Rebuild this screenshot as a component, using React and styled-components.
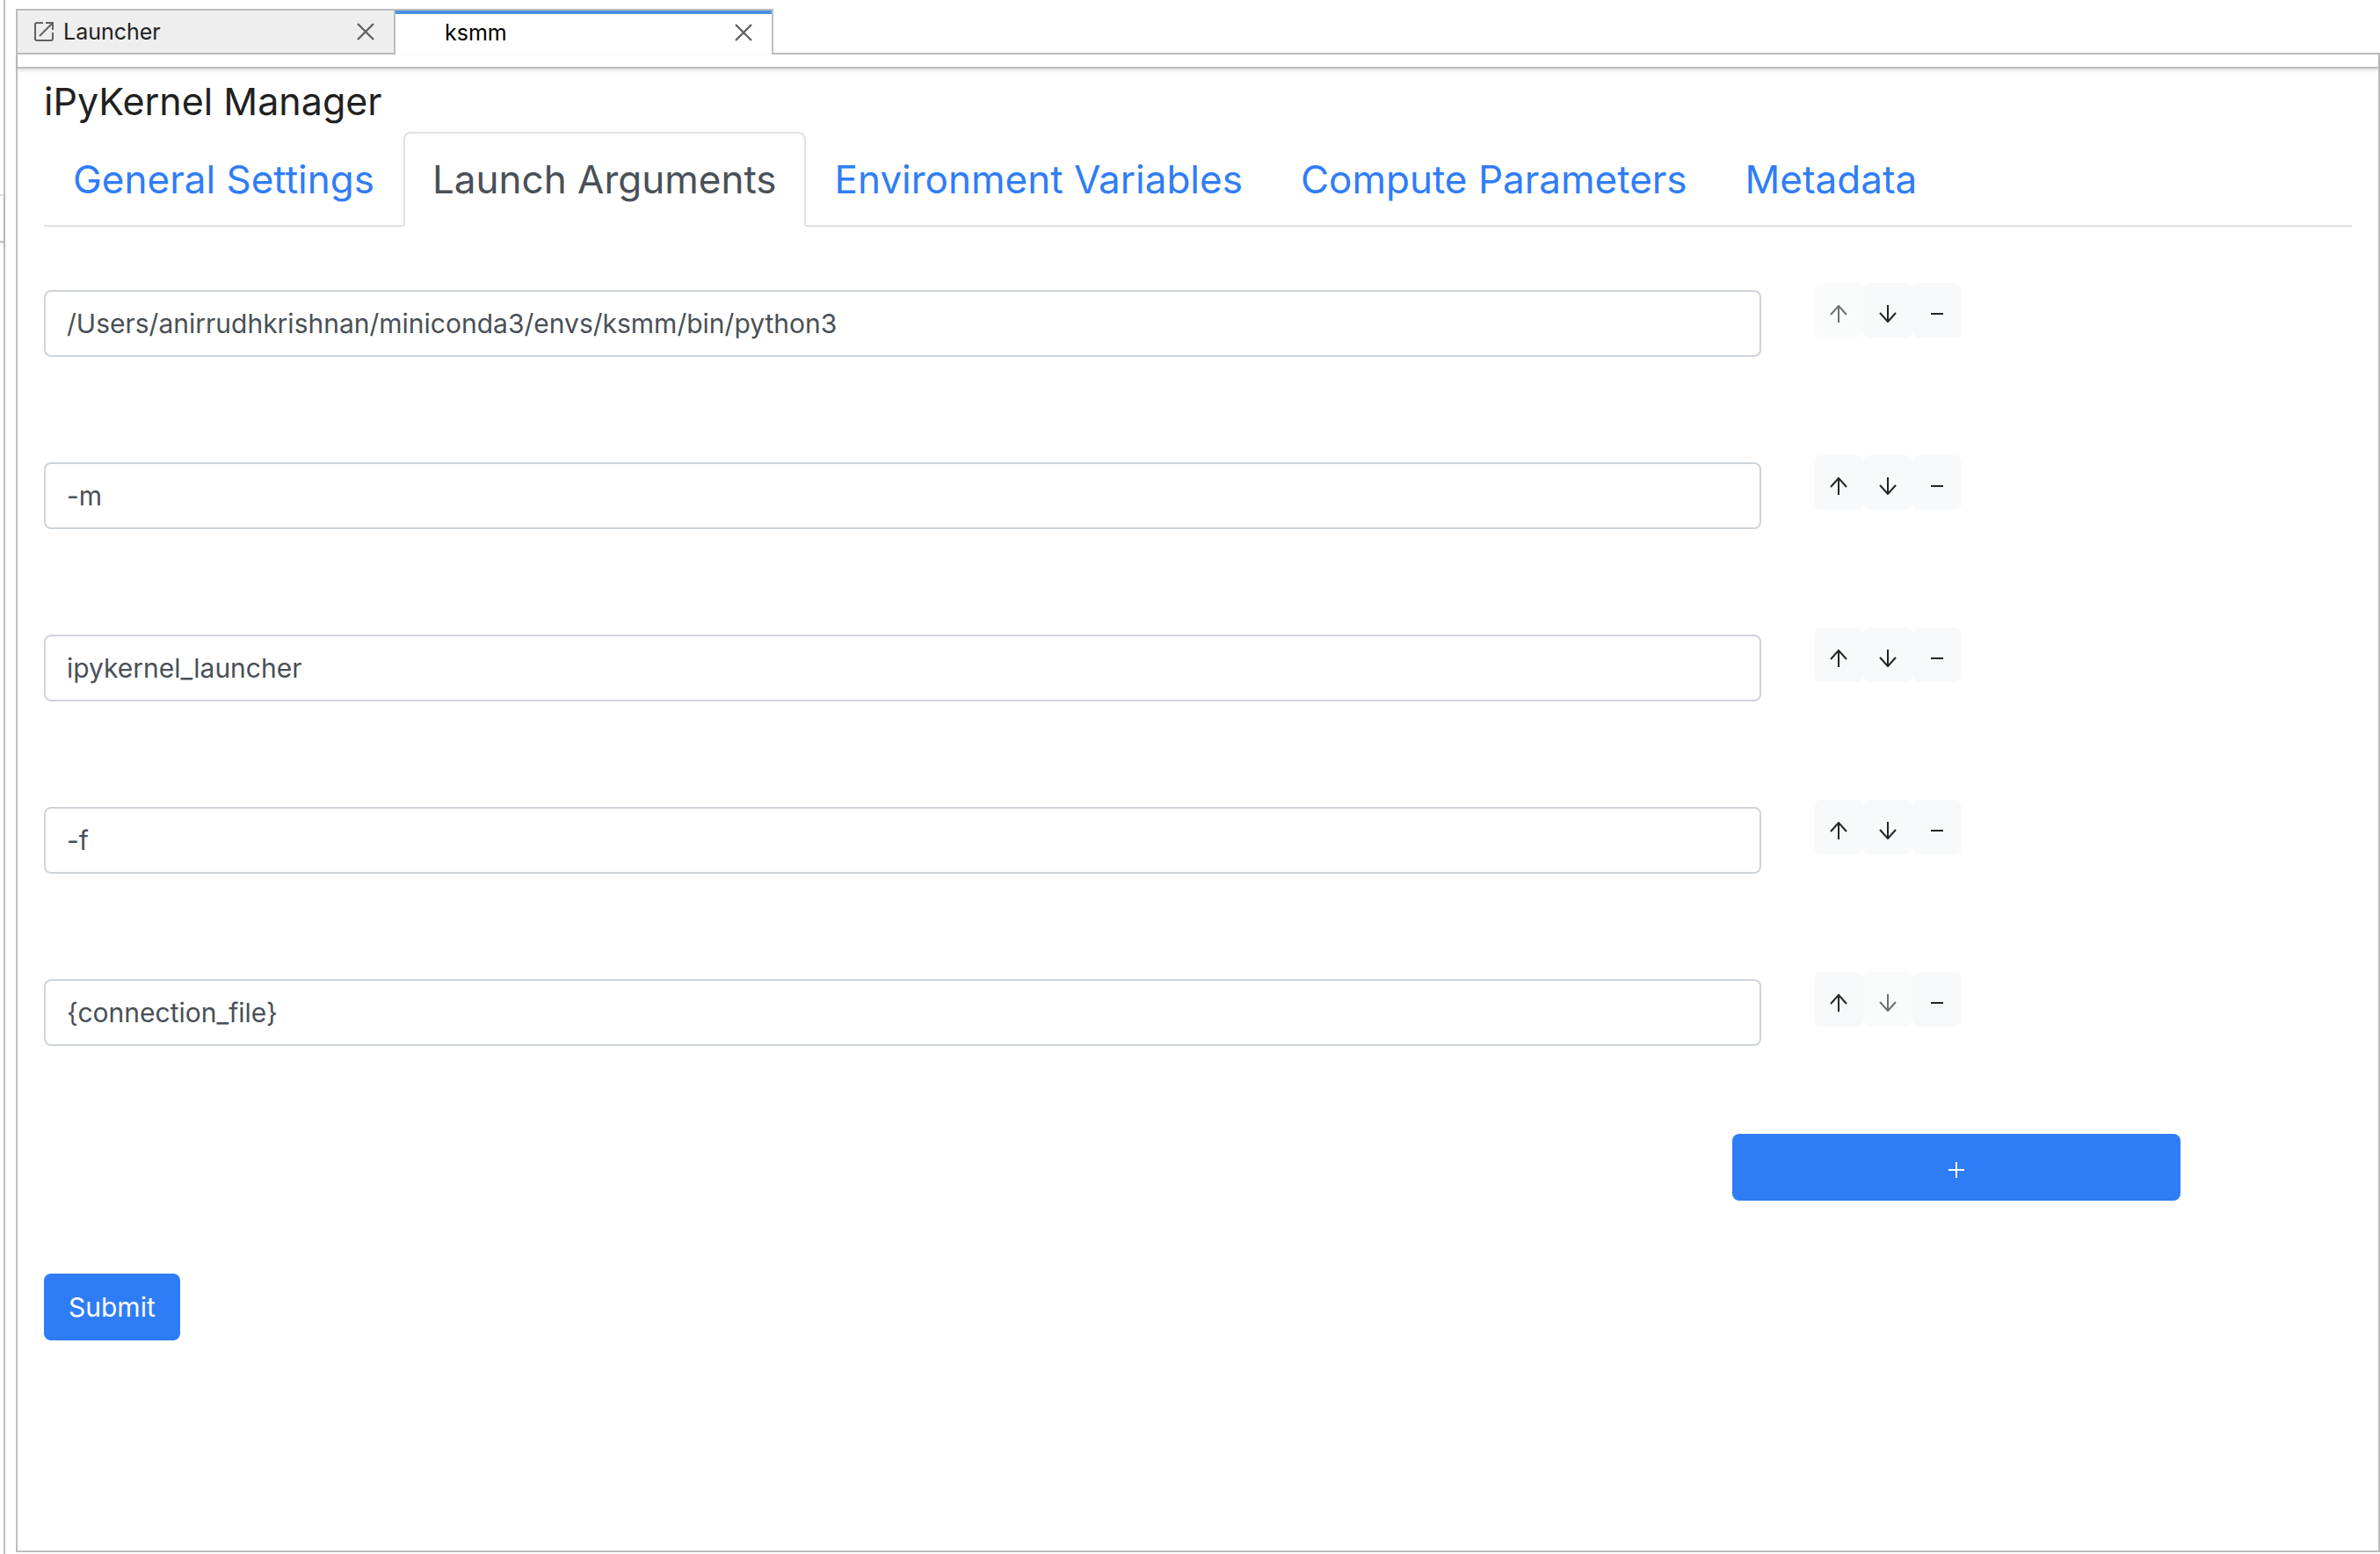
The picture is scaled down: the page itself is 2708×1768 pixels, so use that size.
import React, { useState } from "react";
import styled, { createGlobalStyle } from "styled-components";

const GlobalStyle = createGlobalStyle`
  *, *::before, *::after { box-sizing: border-box; }
  html, body, #root { height: 100%; }
  body {
    margin: 0;
    background: #fff;
    color: #212121;
    font-family: Inter, Roboto, "Liberation Sans", sans-serif;
    font-size: 30px;
    line-height: 48px;
  }
  button, input { font: inherit; }
`;

const line = "#bdbdbd";

const Shell = styled.div`
  display: flex;
  min-height: 100vh;
`;

const SideBar = styled.aside`
  flex: 0 0 6px;
  padding-top: 221px;
  border-right: 2px solid ${line};
`;

const SideSection = styled.div`
  height: 55px;
  border-top: 2px solid #e0e0e0;
  border-bottom: 2px solid ${line};
  box-shadow: 0 2px 4px rgba(0, 0, 0, 0.12);
`;

const Dock = styled.main`
  flex: 1;
  min-width: 0;
  display: flex;
  flex-direction: column;
  padding: 10px 0 2px 12px;
`;

const DockTabs = styled.div`
  display: flex;
  height: 52px;
`;

const DockTab = styled.div`
  flex: 0 0 ${(p) => (p.$current ? 430 : 432)}px;
  display: flex;
  align-items: center;
  padding: 0 22px 0 ${(p) => (p.$current ? 56 : 18)}px;
  color: ${(p) => (p.$current ? "#000" : "#212121")};
  background: ${(p) => (p.$current ? "#fff" : "#eee")};
  border: solid ${line};
  border-width: ${(p) => (p.$current ? "2px 2px 0 0" : "2px")};
  box-shadow: ${(p) => (p.$current ? "inset 0 4px #4a90e2" : "none")};
`;

const DockTabLabel = styled.span`
  flex: 1;
  font-size: 25px;
  line-height: 48px;
`;

const DockTabFill = styled.div`
  flex: 1;
  border-bottom: 2px solid ${line};
`;

const IconButton = styled.button`
  display: flex;
  padding: 0;
  border: 0;
  background: none;
  color: #616161;
`;

const LaunchMark = styled.svg`
  width: 24px;
  height: 24px;
  margin-right: 10px;
`;

const Panel = styled.section`
  flex: 1;
  border: solid ${line};
  border-width: 0 2px 2px;
`;

const Toolbar = styled.div`
  height: 16px;
  border-bottom: 2px solid ${line};
  box-shadow: 0 2px 4px rgba(0, 0, 0, 0.14);
`;

const Content = styled.div`
  padding: 8px 30px 0;
`;

const Title = styled.h1`
  margin: 0;
  padding-bottom: 6px;
  font-size: 43px;
  line-height: 58px;
  font-weight: 400;
`;

const Nav = styled.nav`
  display: flex;
  border-bottom: 2px solid #dee2e6;
`;

const NavLink = styled.a`
  margin-bottom: -2px;
  padding: 16px 31px;
  border: 2px solid transparent;
  border-radius: 8px 8px 0 0;
  font-size: 44px;
  line-height: 72px;
  white-space: nowrap;
  text-decoration: none;
  color: #2f7df6;
  ${(p) =>
    p.$active &&
    `
    color: #495057;
    background: #fff;
    border-color: #dee2e6 #dee2e6 #fff;
  `}
`;

const Form = styled.form`
  display: flex;
  flex-direction: column;
  align-items: flex-start;
  padding-top: 64px;
`;

const ArgumentRow = styled.div`
  display: grid;
  grid-template-columns: calc(75% - 16px) auto;
  column-gap: 60px;
  justify-content: start;
  width: 100%;
  height: 196px;
  padding-top: 8px;
`;

const ArgumentInput = styled.input`
  width: 100%;
  height: 76px;
  padding: 12px 24px;
  border: 2px solid #ced4da;
  border-radius: 8px;
  background: #fff;
  color: #495057;
`;

const RowActions = styled.div`
  display: flex;
  height: 62px;
  margin-top: -8px;
`;

const RowButton = styled.button`
  display: flex;
  align-items: center;
  justify-content: center;
  width: 56px;
  padding: 8px 0 0;
  border: 0;
  border-radius: 8px;
  background: #f8f9fa;
  color: #212529;
  &:disabled { opacity: 0.65; }
`;

const PrimaryButton = styled.button`
  display: flex;
  align-items: center;
  justify-content: center;
  height: 76px;
  padding: 0 28px;
  border: 0;
  border-radius: 8px;
  background: #2f7df6;
  color: #fff;
`;

const AddButton = styled(PrimaryButton)`
  align-self: flex-end;
  width: 510px;
  margin: -12px 195px 83px 0;
  padding-top: 6px;
`;

const Glyph = ({ d, size = 20, stroke = 2 }) => (
  <svg width={size} height={size} viewBox={`0 0 ${size} ${size}`} fill="none" stroke="currentColor" strokeWidth={stroke} aria-hidden="true">
    <path d={d} />
  </svg>
);

const CloseButton = ({ name }) => (
  <IconButton type="button" aria-label={`Close ${name}`}>
    <Glyph d="M1 1L19 19M19 1L1 19" stroke={2.4} />
  </IconButton>
);

const sections = ["General Settings", "Launch Arguments", "Environment Variables", "Compute Parameters", "Metadata"];

const initialArguments = [
  "/Users/anirrudhkrishnan/miniconda3/envs/ksmm/bin/python3",
  "-m",
  "ipykernel_launcher",
  "-f",
  "{connection_file}",
];

export default function App() {
  const [args, setArgs] = useState(initialArguments);

  const swap = (a, b) => {
    const next = [...args];
    [next[a], next[b]] = [next[b], next[a]];
    setArgs(next);
  };

  return (
    <>
      <GlobalStyle />
      <Shell>
        <SideBar>
          <SideSection />
        </SideBar>
        <Dock>
          <DockTabs>
            <DockTab>
              <LaunchMark viewBox="0 0 24 24" fill="none" stroke="#616161" strokeWidth="2" aria-hidden="true">
                <path d="M11 2H4Q2 2 2 4V20Q2 22 4 22H20Q22 22 22 20V13M14 2H22V10M22 2L7 17" />
              </LaunchMark>
              <DockTabLabel>Launcher</DockTabLabel>
              <CloseButton name="Launcher" />
            </DockTab>
            <DockTab $current>
              <DockTabLabel>ksmm</DockTabLabel>
              <CloseButton name="ksmm" />
            </DockTab>
            <DockTabFill />
          </DockTabs>
          <Panel>
            <Toolbar />
            <Content>
              <Title>iPyKernel Manager</Title>
              <Nav>
                {sections.map((name) => (
                  <NavLink key={name} href="#" $active={name === "Launch Arguments"}>
                    {name}
                  </NavLink>
                ))}
              </Nav>
              <Form onSubmit={(e) => e.preventDefault()}>
                {args.map((value, i) => (
                  <ArgumentRow key={i}>
                    <ArgumentInput
                      aria-label={`Argument ${i + 1}`}
                      value={value}
                      onChange={(e) => setArgs(args.map((v, j) => (j === i ? e.target.value : v)))}
                    />
                    <RowActions>
                      <RowButton type="button" aria-label="Move up" disabled={i === 0} onClick={() => swap(i, i - 1)}>
                        <Glyph d="M10 20V1M1 11L10 1L19 11" />
                      </RowButton>
                      <RowButton type="button" aria-label="Move down" disabled={i === args.length - 1} onClick={() => swap(i, i + 1)}>
                        <Glyph d="M10 0V19M1 9L10 19L19 9" />
                      </RowButton>
                      <RowButton type="button" aria-label="Remove" onClick={() => setArgs(args.filter((_, j) => j !== i))}>
                        <Glyph d="M3 10H17" />
                      </RowButton>
                    </RowActions>
                  </ArgumentRow>
                ))}
                <AddButton type="button" aria-label="Add argument" onClick={() => setArgs([...args, ""])}>
                  <Glyph d="M9 0V18M0 9H18" size={18} />
                </AddButton>
                <PrimaryButton type="submit">Submit</PrimaryButton>
              </Form>
            </Content>
          </Panel>
        </Dock>
      </Shell>
    </>
  );
}
